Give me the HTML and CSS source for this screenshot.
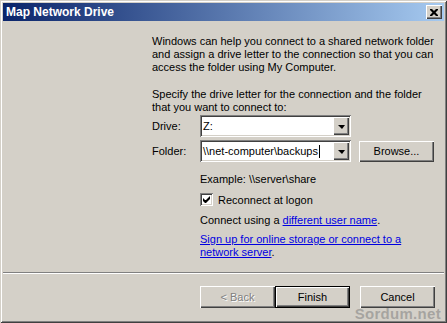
FILE: index.html
```html
<!DOCTYPE html>
<html>
<head>
<meta charset="utf-8">
<link rel="stylesheet" href="styles.css">
</head>
<body>
<div class="window">
  <div class="titlebar">
    <span class="title">Map Network Drive</span>
    <span class="close"><svg width="8" height="7" viewBox="0 0 8 7"><path d="M0 0h2l2 2 2-2h2v1l-2.5 2.5 2.5 2.5v1h-2l-2-2-2 2h-2v-1l2.5-2.5-2.5-2.5z" fill="#000"/></svg></span>
  </div>
  <div class="body">
    <div class="main">
      <p class="intro">Windows can help you connect to a shared network folder<br>and assign a drive letter to the connection so that you can<br>access the folder using My Computer.</p>
      <p class="spec">Specify the drive letter for the connection and the folder<br>that you want to connect to:</p>
      <div class="row row-drive">
        <span class="lbl">Drive:</span>
        <div class="combo"><div class="field">Z:</div><div class="drop"><span class="tri"></span></div></div>
      </div>
      <div class="row row-folder">
        <span class="lbl">Folder:</span>
        <div class="combo"><div class="field">\\net-computer\backups<span class="caret"></span></div><div class="drop"><span class="tri"></span></div></div>
        <div class="btn browse">Browse...</div>
      </div>
      <p class="example">Example: \\server\share</p>
      <div class="check">
        <span class="box"><svg width="7" height="7" viewBox="0 0 7 7"><path d="M0 2v3l2 2h1l4-4v-3l-4 4h-1z" fill="#000"/></svg></span>
        <span>Reconnect at logon</span>
      </div>
      <p class="connect">Connect using a <a class="link">different user name</a>.</p>
      <p class="signup"><a class="link">Sign up for online storage or connect to a<br>network server</a>.</p>
    </div>
    <div class="sep"></div>
    <div class="buttons">
      <div class="btn disabled">&lt; Back</div>
      <div class="btn default">Finish</div>
      <div class="btn cancel">Cancel</div>
    </div>
  </div>
  <div class="watermark">Sordum.net</div>
</div>
</body>
</html>
```
FILE: styles.css
```css
html, body { margin: 0; padding: 0; background: #d4d0c8; }
.window {
  width: 447px; height: 323px; box-sizing: border-box; padding: 3px;
  background: #d4d0c8; position: relative; display: flex; flex-direction: column;
  box-shadow: inset 1px 1px #d4d0c8, inset -1px -1px #404040, inset 2px 2px #fff, inset -2px -2px #808080;
  font-family: "Liberation Sans", Arial, sans-serif; font-size: 11px; color: #000;
}
.titlebar {
  height: 18px; flex: none; display: flex; align-items: center; justify-content: space-between;
  padding: 0 2px 0 3px; background: linear-gradient(to right, #0a246a, #a6caf0);
}
.title { color: #fff; font-weight: bold; font-size: 12px; }
.close {
  width: 16px; height: 14px; box-sizing: border-box; background: #d4d0c8;
  display: flex; align-items: center; justify-content: center;
  box-shadow: inset 1px 1px #fff, inset -1px -1px #404040, inset -2px -2px #808080;
}
.body { flex: 1; display: flex; flex-direction: column; }
.main { flex: 1; padding-left: 149px; }
p { margin: 0; line-height: 13px; }
.intro { margin-top: 14px; }
.spec { margin-top: 14px; }
.row { display: flex; align-items: center; height: 22px; }
.row-drive { margin-top: 1px; }
.row-folder { margin-top: 3px; }
.lbl { width: 48px; }
.combo {
  width: 151px; height: 22px; box-sizing: border-box; background: #fff; display: flex;
  padding: 2px;
  box-shadow: inset 1px 1px #808080, inset -1px -1px #fff, inset 2px 2px #404040, inset -2px -2px #d4d0c8;
}
.field { flex: 1; line-height: 18px; padding-left: 1px; display: flex; align-items: center; }
.caret { display: inline-block; width: 1px; height: 13px; background: #000; margin-left: 1px; }
.drop {
  width: 16px; background: #d4d0c8; display: flex; align-items: center; justify-content: center;
  box-shadow: inset 1px 1px #fff, inset -1px -1px #404040, inset -2px -2px #808080;
}
.tri { width: 0; height: 0; border-left: 4px solid transparent; border-right: 3px solid transparent; border-top: 4px solid #000; margin-top: 1px; }
.btn {
  width: 75px; height: 22px; box-sizing: border-box; display: flex; align-items: center; justify-content: center;
  background: #d4d0c8;
  box-shadow: inset 1px 1px #fff, inset -1px -1px #404040, inset -2px -2px #808080;
}
.browse { margin-left: 8px; height: 21px; }
.example { margin-top: 11px; }
.check { display: flex; align-items: center; margin-top: 7px; height: 13px; }
.box {
  width: 13px; height: 13px; box-sizing: border-box; background: #fff; margin-left: 48px; margin-right: 5px;
  display: flex; align-items: center; justify-content: center;
  box-shadow: inset 1px 1px #808080, inset -1px -1px #fff, inset 2px 2px #404040, inset -2px -2px #d4d0c8;
}
.connect { margin-top: 8px; }
.signup { margin-top: 6px; }
.example, .connect, .signup { padding-left: 48px; }
.link { color: #0000e0; text-decoration: underline; }
.sep { height: 2px; flex: none; box-shadow: inset 0 1px #808080, inset 0 -1px #fff; }
.buttons { display: flex; justify-content: flex-end; padding: 12px 9px 12px 0; }
.disabled { color: #808080; text-shadow: 1px 1px #fff; }
.default { box-shadow: inset 0 0 0 1px #000, inset 2px 2px #fff, inset -2px -2px #404040, inset -3px -3px #808080; }
.cancel { margin-left: 10px; }
.watermark {
  position: absolute; right: 6px; bottom: 1px; font-size: 15px; font-weight: bold;
  color: rgba(120, 120, 120, 0.5); letter-spacing: 0.3px;
}
```
